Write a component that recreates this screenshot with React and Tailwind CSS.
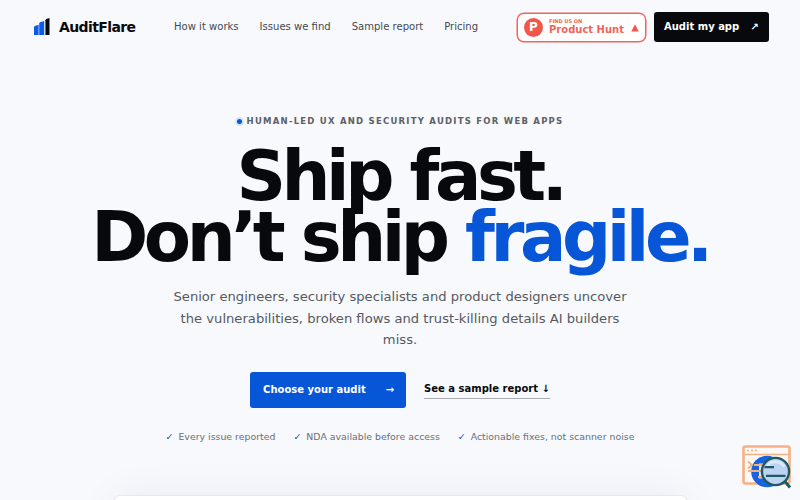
const navLinks = ["How it works", "Issues we find", "Sample report", "Pricing"]

const promises = [
  "Every issue reported",
  "NDA available before access",
  "Actionable fixes, not scanner noise",
]

function Logo() {
  return (
    <svg className="mb-[1px]" width="16" height="17" viewBox="0 0 16 17">
      <path d="M0 9 .8 7.900 4.600 6.700V17H0z" fill="#0b5be6" />
      <path d="M5.200 5.200 6 4.200 10.200 3V17H5.200z" fill="#0b5be6" />
      <path d="M11.400 2.200 12.200 1 15.500 0V17h-4.100z" fill="#08090c" />
    </svg>
  )
}

function ProductHuntBadge() {
  return (
    <a
      href="#"
      className="flex h-[29px] w-[129px] items-center rounded-[7px] border border-[#f2645a] bg-white pl-[6px] pr-[6px] text-[#f2645a] shadow-[0_0_0_0.5px_#f2645a]"
    >
      <span className="flex size-[19px] shrink-0 items-center justify-center rounded-full bg-[#f2574c] text-[12px] font-bold text-white">
        P
      </span>
      <span className="ml-[6px] flex flex-col whitespace-nowrap pb-[1px] font-bold">
        <span className="text-[5px] leading-[6px]">FIND US ON</span>
        <span className="text-[10px] leading-[11px]">Product Hunt</span>
      </span>
      <svg className="mt-[1px] ml-auto" width="8" height="8" viewBox="0 0 8 8">
        <path d="M4 0.3 7.8 7.6H0.2z" fill="#f2574c" />
      </svg>
    </a>
  )
}

function AuditWidget() {
  return (
    <svg width="50" height="45" viewBox="0 0 50 45" fill="none">
      <rect x="1.500" y="1.500" width="46" height="37" rx="2" fill="#fdf8f5" stroke="#f4b183" strokeWidth="2.600" />
      <path d="M2 9.500H47" stroke="#f4b183" strokeWidth="1.600" />
      <path d="M5 5.500h2M9 5.500h2M13 5.500h2" stroke="#f4b183" strokeWidth="1.500" />
      <circle cx="25" cy="26.500" r="15.800" fill="#1764e0" />
      <path d="M17 18.500h10v15H17z" fill="#e8effb" />
      <path d="M6 16.500 10 20 6 23.500M6 26h13M12 20h9M16 32h6" stroke="#f4b183" strokeWidth="1.800" />
      <circle cx="33.500" cy="26.500" r="13.600" fill="#bcd3f3" stroke="#205a63" strokeWidth="2.400" />
      <path d="M25 21.500A10 10 0 0 1 42 21.500" stroke="#dbe8fa" strokeWidth="3" />
      <path d="M22.500 22.200h9.500M24 30.800h19.500" stroke="#205a63" strokeWidth="2.200" />
      <path d="M43 36.500 48 42.500" stroke="#205a63" strokeWidth="3" />
    </svg>
  )
}

function App() {
  return (
    <div className="relative flex h-[500px] w-[800px] flex-col overflow-hidden bg-[#f7f9fd] font-['DejaVu_Sans',sans-serif] text-[#08090c]">
      {/* Nav */}
      <nav className="flex h-[54px] shrink-0 items-center pl-[34px] pr-[31px]">
        <div className="flex w-[140px] items-center gap-[9px]">
          <Logo />
          <span className="text-[14px] font-bold tracking-[-0.043em]">AuditFlare</span>
        </div>
        <div className="flex gap-[21px] whitespace-nowrap pb-[1px] text-[10.060px] text-[#45494e]">
          {navLinks.map((link) => (
            <a key={link} href="#">
              {link}
            </a>
          ))}
        </div>
        <div className="ml-auto flex items-center gap-[8px]">
          <ProductHuntBadge />
          <a
            href="#"
            className="flex h-[30px] w-[115px] items-center justify-between rounded-[3px] bg-[#08090c] px-[10px] pb-[1px] text-[10px] font-bold text-white"
          >
            <span>Audit my app</span>
            <span>↗</span>
          </a>
        </div>
      </nav>

      {/* Hero */}
      <section className="flex flex-col items-center pt-[61px] text-center">
        <p className="flex h-[13px] items-center gap-[5px] whitespace-nowrap text-[8.500px] font-bold tracking-[0.145em] text-[#5c6066]">
          <span className="size-[5px] rounded-full bg-[#0756d8] ring-[2px] ring-[#d5e5fb]" />
          HUMAN-LED UX AND SECURITY AUDITS FOR WEB APPS
        </p>
        <h1 className="mt-[18px] whitespace-nowrap text-[68.800px] font-bold leading-[60.540px] tracking-[-0.065em]">
          Ship fast.
          <br />
          Don’t ship <span className="text-[#0756d8]">fragile.</span>
        </h1>
        <p className="mt-[19px] w-[470px] text-[13.140px] leading-[21.600px] text-[#565a60]">
          Senior engineers, security specialists and product designers uncover
          the vulnerabilities, broken flows and trust-killing details AI builders
          miss.
        </p>
        <div className="mt-[21px] flex items-center gap-[18px] text-[10px] font-bold">
          <a
            href="#"
            className="flex h-[36px] w-[156px] items-center justify-between rounded-[3px] bg-[#0756d8] pr-[12px] pb-[1px] pl-[13px] text-white"
          >
            <span>Choose your audit</span>
            <span>→</span>
          </a>
          <a href="#" className="flex h-[19px] items-start border-b border-[#a9acb1] whitespace-nowrap pt-[0.5px]">
            See a sample report ↓
          </a>
        </div>
        <ul className="mt-[22px] flex gap-[18px] whitespace-nowrap text-[9.400px] leading-[14px] text-[#6b6f75]">
          {promises.map((item) => (
            <li key={item} className="flex gap-[5px]">
              <span className="text-[#2a4f9e]">✓</span>
              {item}
            </li>
          ))}
        </ul>
      </section>

      {/* Report preview */}
      <div className="mx-auto mt-[51px] h-[60px] w-[573px] shrink-0 rounded-[6px] border border-[#e6e8ee] bg-white shadow-[0_0_40px_rgba(20,30,70,0.06)]" />

      <div className="absolute left-[742px] top-[445px]">
        <AuditWidget />
      </div>
    </div>
  )
}

export default App
